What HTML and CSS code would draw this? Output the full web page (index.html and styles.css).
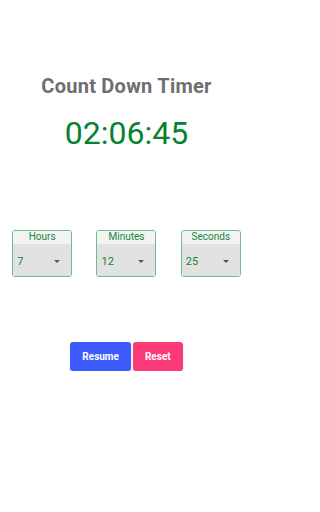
FILE: index.html
```html
<!DOCTYPE html>
<html lang="en">
<head>
<meta charset="utf-8">
<title>Count Down Timer</title>
<link rel="stylesheet" href="styles.css">
</head>
<body>
<main class="app">
  <h1 class="title">Count Down Timer</h1>
  <div class="clock">02:06:45</div>
  <div class="pickers">
    <div class="picker">
      <div class="picker-label">Hours</div>
      <div class="picker-select"><span class="value">7</span><span class="arrow"></span></div>
    </div>
    <div class="picker">
      <div class="picker-label">Minutes</div>
      <div class="picker-select"><span class="value">12</span><span class="arrow"></span></div>
    </div>
    <div class="picker">
      <div class="picker-label">Seconds</div>
      <div class="picker-select"><span class="value">25</span><span class="arrow"></span></div>
    </div>
  </div>
  <div class="actions">
    <button class="btn btn-resume">Resume</button>
    <button class="btn btn-reset">Reset</button>
  </div>
</main>
</body>
</html>
```

FILE: styles.css
```css
html, body {
  margin: 0;
  padding: 0;
  background: #ffffff;
}
body {
  font-family: Roboto, "Liberation Sans", Arial, sans-serif;
}
.app {
  width: 253px;
  display: flex;
  flex-direction: column;
  align-items: center;
  padding-top: 74px;
}
.title {
  margin: 0;
  font-size: 20px;
  line-height: 24px;
  font-weight: 700;
  letter-spacing: 0.25px;
  color: #6e6e6e;
}
.clock {
  margin-top: 15px;
  font-size: 32px;
  line-height: 40px;
  font-weight: 400;
  color: #05832f;
}
.pickers {
  align-self: stretch;
  display: flex;
  justify-content: space-around;
  margin-top: 77px;
}
.picker {
  width: 60px;
  box-sizing: border-box;
  border: 1px solid #6cbd8c;
  border-radius: 3px;
  overflow: hidden;
}
.picker-label {
  background: #f3f3f3;
  color: #17853a;
  font-size: 10px;
  line-height: 12px;
  padding-bottom: 1px;
  text-align: center;
}
.picker-select {
  background: #e2e2e2;
  height: 32px;
  box-sizing: border-box;
  padding: 11px 11px 0 4px;
  display: flex;
  justify-content: space-between;
  align-items: flex-start;
}
.value {
  color: #17853a;
  font-size: 11px;
  line-height: 13px;
}
.arrow {
  margin-top: 5px;
  width: 0;
  height: 0;
  border-left: 3px solid transparent;
  border-right: 3px solid transparent;
  border-top: 3px solid #555555;
}
.actions {
  display: flex;
  gap: 2px;
  margin-top: 65px;
}
.btn {
  height: 29px;
  padding: 0 12px;
  border: none;
  border-radius: 3px;
  color: #ffffff;
  font-family: Roboto, "Liberation Sans", Arial, sans-serif;
  font-size: 10px;
  font-weight: 700;
  box-shadow: 0 1px 2px rgba(0, 0, 0, 0.15);
}
.btn-resume {
  background: #3d5bfd;
}
.btn-reset {
  background: #fb3b78;
}
```
